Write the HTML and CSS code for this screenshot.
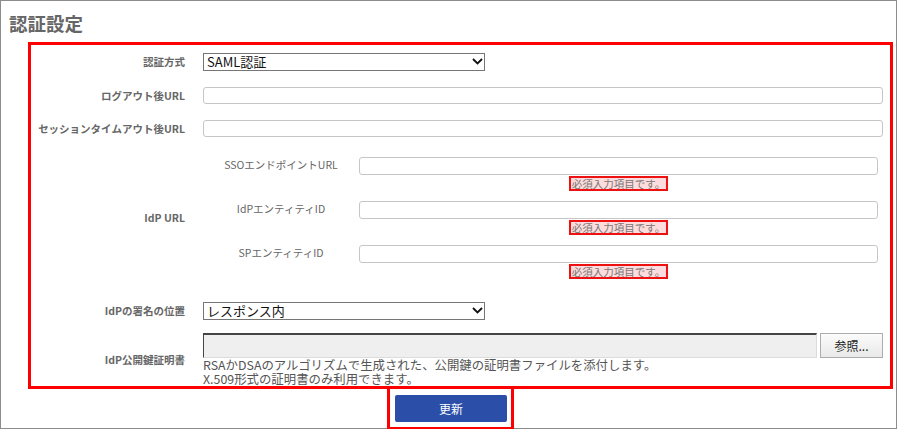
FILE: index.html
```html
<!DOCTYPE html>
<html lang="ja">
<head>
    <meta charset="UTF-8">
    <meta name="viewport" content="width=device-width, initial-scale=1.0">
    <title>認証設定</title>
    <link rel="stylesheet" href="styles.css">
</head>
<body>
    <div class="panel">
        <h1 class="title">認証設定</h1>

        <div class="settings">
            <div class="row row-method">
                <label class="row-label" for="authMethod">認証方式</label>
                <div class="select-wrap">
                    <select id="authMethod">
                        <option>SAML認証</option>
                        <option>パスワード認証</option>
                    </select>
                    <svg class="chevron" width="11" height="7" viewBox="0 0 11 7"><path d="M1 1l4.5 4.5L10 1" fill="none" stroke="#111" stroke-width="1.8"/></svg>
                </div>
            </div>

            <div class="row row-logout">
                <label class="row-label" for="logoutUrl">ログアウト後URL</label>
                <input type="text" class="text-input" id="logoutUrl">
            </div>

            <div class="row row-timeout">
                <label class="row-label" for="timeoutUrl">セッションタイムアウト後URL</label>
                <input type="text" class="text-input" id="timeoutUrl">
            </div>

            <div class="row row-idp">
                <div class="row-label">IdP URL</div>
                <div class="idp-list">
                    <div class="idp-item">
                        <label class="idp-label" for="ssoUrl">SSOエンドポイントURL</label>
                        <div class="idp-field">
                            <input type="text" class="text-input" id="ssoUrl">
                            <span class="error">必須入力項目です。</span>
                        </div>
                    </div>
                    <div class="idp-item">
                        <label class="idp-label" for="idpEntity">IdPエンティティID</label>
                        <div class="idp-field">
                            <input type="text" class="text-input" id="idpEntity">
                            <span class="error">必須入力項目です。</span>
                        </div>
                    </div>
                    <div class="idp-item">
                        <label class="idp-label" for="spEntity">SPエンティティID</label>
                        <div class="idp-field">
                            <input type="text" class="text-input" id="spEntity">
                            <span class="error">必須入力項目です。</span>
                        </div>
                    </div>
                </div>
            </div>

            <div class="row row-sign">
                <label class="row-label" for="signPos">IdPの署名の位置</label>
                <div class="select-wrap">
                    <select id="signPos">
                        <option>レスポンス内</option>
                        <option>アサーション内</option>
                    </select>
                    <svg class="chevron" width="11" height="7" viewBox="0 0 11 7"><path d="M1 1l4.5 4.5L10 1" fill="none" stroke="#111" stroke-width="1.8"/></svg>
                </div>
            </div>

            <div class="row row-cert">
                <div class="row-label">IdP公開鍵証明書</div>
                <div class="cert-block">
                    <div class="file-row">
                        <span class="file-name"></span>
                        <button class="browse">参照...</button>
                    </div>
                    <div class="hint">
                        <div class="hint-line">RSAかDSAのアルゴリズムで生成された、公開鍵の証明書ファイルを添付します。</div>
                        <div class="hint-line">X.509形式の証明書のみ利用できます。</div>
                    </div>
                </div>
            </div>
        </div>

        <div class="submit-area">
            <div class="submit-frame">
                <button class="submit">更新</button>
            </div>
        </div>
    </div>
</body>
</html>
```

FILE: styles.css
```css
body {
    margin: 0;
    padding: 0;
    font-family: "Noto Sans CJK JP", "Noto Sans", sans-serif;
    background-color: white;
}

.panel {
    width: 897px;
    height: 429px;
    box-sizing: border-box;
    border: 1px solid #8c8c8c;
}

.title {
    margin: 0;
    padding: 10px 0 7px 8px;
    font-size: 18.5px;
    line-height: 24px;
    font-weight: bold;
    color: #666;
}

.settings {
    margin: 0 3px 0 27px;
    border: 3px solid #ff0000;
    padding: 8px 7px 0 0;
}

.row {
    display: grid;
    grid-template-columns: 154px 1fr;
    column-gap: 18px;
    align-items: center;
}

.row-logout, .row-timeout {
    margin-top: 16px;
}

.row-idp {
    margin-top: 20px;
}

.row-sign {
    margin-top: 23px;
}

.row-cert {
    margin-top: 13px;
}

.row-label {
    text-align: right;
    font-size: 10.5px;
    line-height: 14px;
    font-weight: bold;
    color: #666;
}

.select-wrap {
    position: relative;
    width: 282px;
}

.select-wrap select {
    display: block;
    width: 100%;
    height: 18px;
    padding: 0 0 0 3px;
    margin: 0;
    border: 1px solid #767676;
    border-radius: 0;
    background-color: white;
    font-family: inherit;
    font-size: 13px;
    line-height: 16px;
    color: #111;
    -webkit-appearance: none;
    appearance: none;
}

.chevron {
    position: absolute;
    right: 2px;
    top: 5px;
    pointer-events: none;
}

.text-input {
    display: block;
    width: 100%;
    height: 17px;
    box-sizing: border-box;
    margin: 0;
    border: 1px solid #c6c6c6;
    border-radius: 3px;
    background-color: white;
}

.idp-list {
    display: flex;
    flex-direction: column;
    gap: 10px;
}

.idp-item {
    display: grid;
    grid-template-columns: 156px 1fr;
    align-items: start;
}

.idp-label {
    padding-top: 1px;
    text-align: center;
    font-size: 10.5px;
    line-height: 14px;
    color: #666;
}

.idp-field {
    display: flex;
    flex-direction: column;
    align-items: center;
    margin-right: 5px;
}

.idp-field .text-input {
    height: 18px;
}

.error {
    margin-top: 1px;
    height: 15px;
    box-sizing: border-box;
    padding: 0 1px;
    border: 2px solid #ee1111;
    background-color: #fcdcdc;
    font-size: 10.5px;
    line-height: 11px;
    color: #777;
    white-space: nowrap;
}

.cert-block {
    display: flex;
    flex-direction: column;
}

.file-row {
    display: flex;
    gap: 3px;
    height: 25px;
}

.file-name {
    flex: 1;
    box-sizing: border-box;
    border: 1px solid #dcdcdc;
    border-top: 2px solid #444;
    border-left: 1px solid #444;
    background-color: #efefef;
}

.browse {
    width: 63px;
    height: 25px;
    margin: 0;
    padding: 0;
    border: 1px solid #adadad;
    border-radius: 0;
    background: linear-gradient(#fbfbfb, #e9e9e9);
    font-family: inherit;
    font-size: 12px;
    color: #222;
    cursor: pointer;
}

.hint {
    font-size: 12.4px;
    color: #555;
}

.hint-line {
    height: 14px;
    line-height: 14px;
    white-space: nowrap;
}

.submit-area {
    display: flex;
    justify-content: center;
    padding-left: 4px;
}

.submit-frame {
    border: 3px solid #ff0000;
    border-top: none;
    padding: 6px 4px 5px 5px;
}

.submit {
    display: block;
    width: 112px;
    height: 27px;
    border: none;
    border-radius: 2px;
    background-color: #2b4fa8;
    color: white;
    font-family: inherit;
    font-size: 12px;
    cursor: pointer;
}
```
